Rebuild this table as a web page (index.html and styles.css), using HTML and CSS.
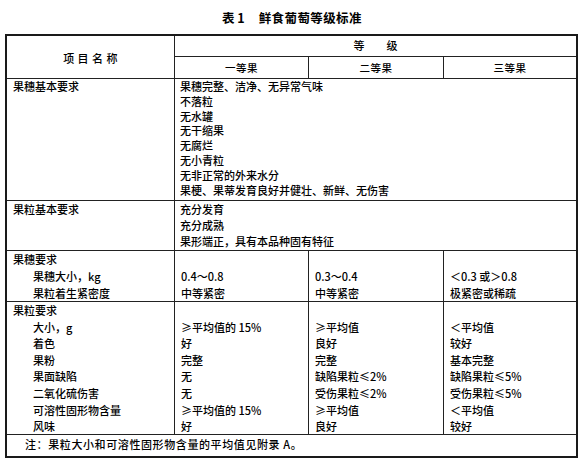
FILE: index.html
```html
<!DOCTYPE html>
<html lang="zh-CN">
<head>
<meta charset="utf-8">
<title>表1 鲜食葡萄等级标准</title>
<link rel="stylesheet" href="styles.css">
</head>
<body>
<div class="page">
  <h1 class="title"><span class="t-no">表 1</span><span class="t-name">鲜食葡萄等级标准</span></h1>
  <div class="grid">
    <div class="c h-name">项目名称</div>
    <div class="c h-grade">等　　级</div>
    <div class="c h-sub">一等果</div>
    <div class="c h-sub">二等果</div>
    <div class="c h-sub last">三等果</div>

    <div class="c left s1"><div class="ln">果穗基本要求</div></div>
    <div class="c span3 s1 last">
      <div class="ln">果穗完整、洁净、无异常气味</div>
      <div class="ln">不落粒</div>
      <div class="ln">无水罐</div>
      <div class="ln">无干缩果</div>
      <div class="ln">无腐烂</div>
      <div class="ln">无小青粒</div>
      <div class="ln">无非正常的外来水分</div>
      <div class="ln">果梗、果蒂发育良好并健壮、新鲜、无伤害</div>
    </div>

    <div class="c left s2"><div class="ln">果粒基本要求</div></div>
    <div class="c span3 s2 last">
      <div class="ln">充分发育</div>
      <div class="ln">充分成熟</div>
      <div class="ln">果形端正，具有本品种固有特征</div>
    </div>

    <div class="c left s3">
      <div class="ln">果穗要求</div>
      <div class="ln sub">果穗大小，kg</div>
      <div class="ln sub">果粒着生紧密度</div>
    </div>
    <div class="c s3">
      <div class="ln">&nbsp;</div>
      <div class="ln">0.4～0.8</div>
      <div class="ln">中等紧密</div>
    </div>
    <div class="c s3">
      <div class="ln">&nbsp;</div>
      <div class="ln">0.3～0.4</div>
      <div class="ln">中等紧密</div>
    </div>
    <div class="c s3 last">
      <div class="ln">&nbsp;</div>
      <div class="ln">＜0.3 或＞0.8</div>
      <div class="ln">极紧密或稀疏</div>
    </div>

    <div class="c left s4">
      <div class="ln">果粒要求</div>
      <div class="ln sub">大小，g</div>
      <div class="ln sub">着色</div>
      <div class="ln sub">果粉</div>
      <div class="ln sub">果面缺陷</div>
      <div class="ln sub">二氧化硫伤害</div>
      <div class="ln sub">可溶性固形物含量</div>
      <div class="ln sub">风味</div>
    </div>
    <div class="c s4">
      <div class="ln">&nbsp;</div>
      <div class="ln">≥平均值的 15%</div>
      <div class="ln">好</div>
      <div class="ln">完整</div>
      <div class="ln">无</div>
      <div class="ln">无</div>
      <div class="ln">≥平均值的 15%</div>
      <div class="ln">好</div>
    </div>
    <div class="c s4">
      <div class="ln">&nbsp;</div>
      <div class="ln">≥平均值</div>
      <div class="ln">良好</div>
      <div class="ln">完整</div>
      <div class="ln">缺陷果粒≤2%</div>
      <div class="ln">受伤果粒≤2%</div>
      <div class="ln">≥平均值</div>
      <div class="ln">良好</div>
    </div>
    <div class="c s4 last">
      <div class="ln">&nbsp;</div>
      <div class="ln">＜平均值</div>
      <div class="ln">较好</div>
      <div class="ln">基本完整</div>
      <div class="ln">缺陷果粒≤5%</div>
      <div class="ln">受伤果粒≤5%</div>
      <div class="ln">＜平均值</div>
      <div class="ln">较好</div>
    </div>

    <div class="c note last bottom">注：果粒大小和可溶性固形物含量的平均值见附录 A。</div>
  </div>
</div>
</body>
</html>
```

FILE: styles.css
```css
* { box-sizing: border-box; }
html, body { margin: 0; padding: 0; background: #fff; }
body {
  font-family: "Noto Sans CJK SC", "Noto Sans", sans-serif;
  color: #000;
  width: 580px;
  height: 463px;
  overflow: hidden;
}
.title {
  margin: 0;
  height: 34px;
  padding-top: 9px;
  padding-left: 222px;
  font-size: 12.5px;
  line-height: 17px;
  font-weight: bold;
  white-space: nowrap;
}
.t-no { margin-right: 14px; }
.t-name { letter-spacing: 0.4px; }

.grid {
  margin-left: 5px;
  width: 573px;
  display: grid;
  grid-template-columns: 168px 134px 135px 132px;
  grid-template-rows: 21px 22px 122px 50px 51px 133px 21px;
  border: 2px solid #1a1a1a;
  font-size: 11px;
  font-weight: 500;
}
.c {
  border-right: 1px solid #222;
  border-bottom: 1px solid #222;
  padding-left: 5px;
  white-space: nowrap;
}
.c.last { border-right: none; }
.c.bottom { border-bottom: none; }

.h-name {
  grid-row: 1 / span 2;
  display: flex;
  align-items: center;
  justify-content: center;
  letter-spacing: 3.4px;
  padding-left: 3px;
  padding-top: 1px;
}
.h-grade {
  grid-column: 2 / span 3;
  border-right: none;
  display: flex;
  align-items: center;
  justify-content: center;
  padding-left: 0;
  padding-bottom: 3px;
}
.h-sub {
  display: flex;
  align-items: center;
  justify-content: center;
  padding-left: 0;
  font-size: 10.5px;
  letter-spacing: 0.5px;
}
.span3 { grid-column: 2 / span 3; }

.left { padding-left: 6px; }
.sub { padding-left: 20px; }

.s1 .ln { line-height: 14.8px; }
.s1.left .ln { line-height: 15px; }
.s2 .ln { line-height: 16px; }
.s3 .ln { line-height: 16.8px; }
.s4 .ln { line-height: 16.6px; }

.s3:not(.left), .s4:not(.left) { padding-left: 6px; }

.note {
  grid-column: 1 / span 4;
  padding-left: 18px;
  line-height: 19px;
  letter-spacing: 0.6px;
}
```
